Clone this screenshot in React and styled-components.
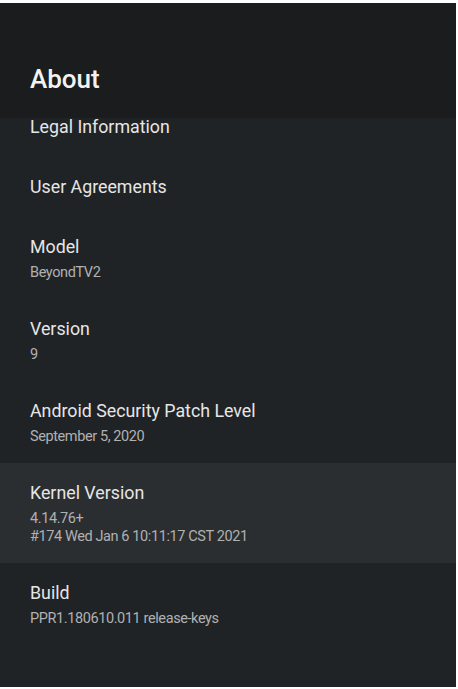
import React from "react";
import styled, { createGlobalStyle } from "styled-components";

const Global = createGlobalStyle`
  html, body { margin: 0; padding: 0; background: #ffffff; }
  body { font-family: Roboto, "Noto Sans", sans-serif; -webkit-font-smoothing: antialiased; }
`;

const Screen = styled.div`
  margin-top: 3px;
  width: 456px;
  height: 684px;
  background: #202325;
  display: flex;
  flex-direction: column;
  overflow: hidden;
`;

const Header = styled.header`
  position: relative;
  z-index: 1;
  height: 115px;
  box-sizing: border-box;
  padding: 59px 30px 0;
  margin-bottom: -21px;
  background: #1a1c1e;
`;

const Title = styled.h1`
  margin: 0;
  font-size: 26px;
  line-height: 34px;
  font-weight: 500;
  color: #f2f2f2;
`;

const List = styled.div`
  display: flex;
  flex-direction: column;
`;

const Row = styled.div`
  display: flex;
  flex-direction: column;
  box-sizing: border-box;
  min-height: 60px;
  padding: 19px 30px 17px;
  background: ${(p) => (p.$focused ? "#2b2e30" : "transparent")};
`;

const RowTitle = styled.div`
  font-size: 17.8px;
  line-height: 22px;
  font-weight: 400;
  color: #e6e6e6;
`;

const RowSub = styled.div`
  margin-top: 6px;
  font-size: 14.5px;
  line-height: 18px;
  color: #b0b1b2;
  letter-spacing: -0.4px;
`;

const SubLine = styled.div``;

const items = [
  { title: "Legal Information" },
  { title: "User Agreements" },
  { title: "Model", sub: ["BeyondTV2"] },
  { title: "Version", sub: ["9"] },
  { title: "Android Security Patch Level", sub: ["September 5, 2020"] },
  {
    title: "Kernel Version",
    sub: ["4.14.76+", "#174 Wed Jan 6 10:11:17 CST 2021"],
    focused: true,
  },
  { title: "Build", sub: ["PPR1.180610.011 release-keys"] },
];

export default function App() {
  return (
    <>
      <Global />
      <Screen>
        <Header>
          <Title>About</Title>
        </Header>
        <List>
          {items.map((it) => (
            <Row key={it.title} $focused={it.focused}>
              <RowTitle>{it.title}</RowTitle>
              {it.sub && (
                <RowSub>
                  {it.sub.map((s) => (
                    <SubLine key={s}>{s}</SubLine>
                  ))}
                </RowSub>
              )}
            </Row>
          ))}
        </List>
      </Screen>
    </>
  );
}
